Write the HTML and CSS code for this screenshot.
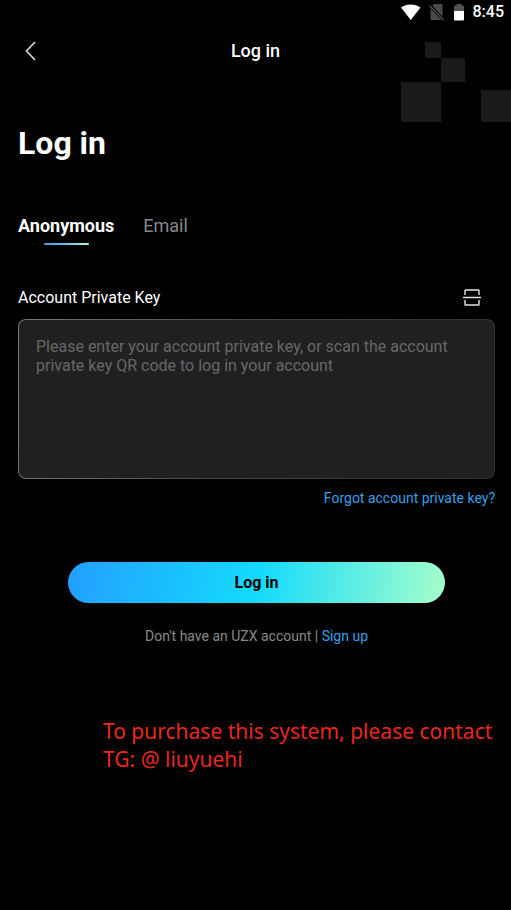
FILE: index.html
```html
<!DOCTYPE html>
<html lang="en">
<head>
<meta charset="utf-8">
<meta name="viewport" content="width=device-width, initial-scale=1">
<title>Log in</title>
<link rel="stylesheet" href="styles.css">
</head>
<body>
<div class="status">
  <svg width="20" height="16" viewBox="0 0 20 16" aria-hidden="true"><path fill="#fff" d="M0 3.6C5.500-.6 14-.6 19.500 3.600L9.750 16z"/></svg>
  <svg width="16" height="17" viewBox="0 0 16 17" aria-hidden="true"><path fill="#4b4b4b" d="M5 0h7q1.500 0 1.500 1.500V16H3q-1.500 0-1.500-1.500V4z"/><path d="M1 1.500L14.500 16" stroke="#000" stroke-width="3"/><path d="M.5 1.500L14.500 16" stroke="#555" stroke-width="1.200"/></svg>
  <svg width="12" height="17" viewBox="0 0 12 17" aria-hidden="true"><path fill="#555" d="M3.500 0h5v1.500H10q1 0 1 1V7H1V2.500q0-1 1-1h1.500z"/><path fill="#fff" d="M1 7h10v8.500q0 1-1 1H2q-1 0-1-1z"/></svg>
  <span class="clock">8:45</span>
</div>
<svg class="pattern" width="110" height="82" viewBox="0 0 110 82" aria-hidden="true"><path fill="#1a1a1a" d="M24 0h16v16H24zM40 16h24v24H40zM0 40h40v40H0zM80 48h30v32H80z"/></svg>
<header class="bar">
  <button class="back" type="button" aria-label="Back"><svg width="12" height="20" viewBox="0 0 12 20" aria-hidden="true"><path d="M11 1L2.500 10L11 19" fill="none" stroke="#ddd" stroke-width="1.600"/></svg></button>
  <span class="bar-title">Log in</span>
</header>
<main class="page">
  <h1>Log in</h1>
  <nav class="tabs">
    <button class="tab active" type="button">Anonymous</button>
    <button class="tab" type="button">Email</button>
  </nav>
  <form>
    <div class="field-head">
      <label for="key">Account Private Key</label>
      <button class="scan" type="button" aria-label="Scan QR code"><svg width="18" height="18" viewBox="0 0 18 18" aria-hidden="true"><path d="M2 6V1.500q0-.5.500-.5h13q.5 0 .5.500V6M2 11v4.500q0 .5.500.500h13q.5 0 .5-.5V11M0 8.500h18" fill="none" stroke="#e4e4e4" stroke-width="1.400"/></svg></button>
    </div>
    <div class="box">
      <textarea id="key" placeholder="Please enter your account private key, or scan the account private key QR code to log in your account"></textarea>
    </div>
    <a class="forgot" href="#forgot">Forgot account private key?</a>
    <button class="submit" type="submit">Log in</button>
    <p class="signup">Don't have an UZX account | <a href="#signup">Sign up</a></p>
  </form>
  <p class="notice">To purchase this system, please contact<br>TG: @ liuyuehi</p>
</main>
</body>
</html>
```
FILE: styles.css
```css
* {
  box-sizing: border-box;
}

body {
  margin: 0;
  min-height: 100vh;
  position: relative;
  background: #000;
  color: #fff;
  font-family: Roboto, sans-serif;
}

button {
  padding: 0;
  border: 0;
  background: none;
  color: inherit;
  font: inherit;
}

svg {
  display: block;
}

a {
  color: #33a1e8;
  text-decoration: none;
}

.status {
  display: flex;
  justify-content: flex-end;
  align-items: center;
  gap: 8px;
  height: 24px;
  padding-right: 7px;
}

.clock {
  font-size: 16px;
  font-weight: 500;
  line-height: 24px;
}

.pattern {
  position: absolute;
  top: 42px;
  right: 0;
}

.bar {
  position: relative;
  display: grid;
  grid-template-columns: 1fr auto 1fr;
  align-items: center;
  height: 54px;
  padding: 0 24px;
}

.back {
  justify-self: start;
}

.bar-title {
  font-size: 18px;
  font-weight: 500;
  line-height: 24px;
}

.page {
  padding: 43px 16px 0 18px;
}

h1 {
  margin: 0;
  font-size: 32px;
  font-weight: 700;
  line-height: 44px;
}

.tabs {
  display: flex;
  gap: 29px;
  margin-top: 49px;
}

.tab {
  color: #888;
  font-size: 18px;
  line-height: 24px;
}

.tab.active {
  color: #fff;
  font-weight: 700;
}

.tab.active::after {
  content: "";
  display: block;
  width: 45px;
  height: 2px;
  margin: 5px auto 0;
  border-radius: 1px;
  background: linear-gradient(90deg, #3f9ee6, #5cc8e0, #b4f5d4);
}

.tab:not(.active) {
  align-self: flex-start;
}

.field-head {
  display: flex;
  justify-content: space-between;
  align-items: center;
  margin-top: 41px;
  padding-right: 14px;
  font-size: 16px;
  line-height: 24px;
}

.box {
  margin-top: 9px;
  height: 160px;
  padding: 1px;
  border-radius: 8px;
  background: linear-gradient(100deg, #777, #444 50%, #303030);
}

textarea {
  display: block;
  width: 100%;
  height: 100%;
  padding: 17px 40px 16px 17px;
  border: 0;
  border-radius: 7px;
  outline: 0;
  resize: none;
  background: #202020;
  color: #fff;
  font: 16px/19px Roboto, sans-serif;
}

textarea::placeholder {
  color: #686868;
  opacity: 1;
}

.forgot {
  display: block;
  margin-top: 9px;
  font-size: 14px;
  line-height: 20px;
  text-align: right;
}

.submit {
  display: block;
  width: calc(100% - 100px);
  height: 41px;
  margin: 54px 50px 0;
  border-radius: 21px;
  background: linear-gradient(100deg, #239fff, #14dafc 50%, #a6ffcb);
  color: #000;
  font-size: 16px;
  font-weight: 700;
}

.signup {
  margin: 23px 0 0;
  color: #888;
  font-size: 14px;
  line-height: 20px;
  text-align: center;
}

.notice {
  margin: 71px -8px 0 85px;
  color: #e8281f;
  font-family: "Noto Sans", sans-serif;
  font-size: 21px;
  line-height: 28px;
}
```
